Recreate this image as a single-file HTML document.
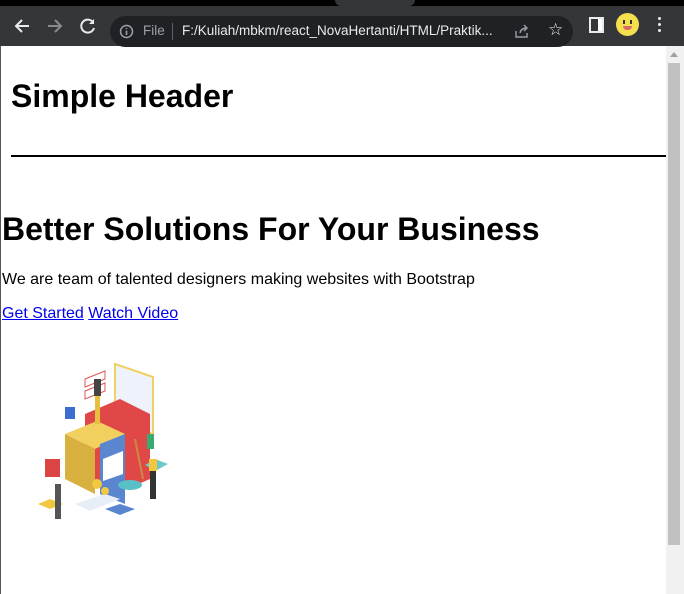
<!DOCTYPE html>
<html><head><style>
body{margin:0;width:684px;height:594px;overflow:hidden;position:relative;background:#fff;font-family:"Liberation Sans",sans-serif}
.top{position:absolute;left:0;top:0;width:684px;height:6px;background:#000}
.tab{position:absolute;left:335px;top:0;width:80px;height:6px;background:#35363a;border-radius:0 0 6px 6px}
.bar{position:absolute;left:0;top:6px;width:684px;height:40px;background:#35363a}
.omni{position:absolute;left:110px;top:10px;width:463px;height:31px;background:#202124;border-radius:16px}
.t{position:absolute;color:#e8eaed;font-size:13.5px}
.page{position:absolute;left:0;top:46px;width:666px;height:548px;border-left:1px solid #555}
.sb{position:absolute;left:666px;top:46px;width:18px;height:548px;background:#f1f1f1}
.thumb{position:absolute;left:668px;top:63px;width:12px;height:482px;background:#c1c1c1}
h1,h2{margin:0;position:absolute;font-weight:bold;color:#000}
a{color:#00e;text-decoration:underline}
</style></head><body>
<div class="top"></div><div class="tab"></div>
<div class="bar">
<svg style="position:absolute;left:12px;top:10px" width="20" height="20" viewBox="0 0 20 20"><path d="M17 10H4M10 4L4 10L10 16" stroke="#e8eaed" stroke-width="2" fill="none"/></svg>
<svg style="position:absolute;left:45px;top:10px" width="20" height="20" viewBox="0 0 20 20"><path d="M3 10H16M10 4L16 10L10 16" stroke="#8a8b8e" stroke-width="2" fill="none"/></svg>
<svg style="position:absolute;left:78px;top:10px" width="20" height="20" viewBox="0 0 20 20"><path d="M15.5 7A6.5 6.5 0 1 0 16 12" stroke="#e8eaed" stroke-width="2" fill="none"/><path d="M16 3V8H11Z" fill="#e8eaed"/></svg>
<div class="omni">
<svg style="position:absolute;left:9px;top:8px" width="15" height="15" viewBox="0 0 15 15"><circle cx="7.5" cy="7.5" r="6" stroke="#9aa0a6" stroke-width="1.5" fill="none"/><path d="M7.5 6.5V11M7.5 4V5" stroke="#9aa0a6" stroke-width="1.6"/></svg>
<span class="t" style="left:33px;top:7px;color:#9aa0a6">File</span>
<div style="position:absolute;left:62px;top:7px;width:1px;height:17px;background:#5f6368"></div>
<span class="t" style="left:72px;top:7px">F:/Kuliah/mbkm/react_NovaHertanti/HTML/Praktik...</span>
<svg style="position:absolute;left:404px;top:7px" width="16" height="16" viewBox="0 0 16 16"><path d="M2 8V14H13V10M6 10Q7 5 13 5M10 2L13 5L10 8" stroke="#9aa0a6" stroke-width="1.4" fill="none"/></svg>
<span class="t" style="left:438px;top:4px;font-size:17px">☆</span>
</div>
<div style="position:absolute;left:589px;top:11px;width:10px;height:12px;border:2px solid #e8eaed;border-left-width:3px;background:#fff"></div>
<div style="position:absolute;left:589px;top:11px;width:7px;height:12px;border:2px solid #e8eaed;border-right:none;background:#35363a"></div>
<div style="position:absolute;left:616px;top:7px;width:23px;height:23px;border-radius:50%;background:#f4e04d"><div style="position:absolute;left:7px;top:7px;width:2px;height:4px;background:#333"></div><div style="position:absolute;left:14px;top:7px;width:2px;height:4px;background:#333"></div><div style="position:absolute;left:7px;top:13px;width:9px;height:4px;border-radius:0 0 5px 5px;background:#d66"></div></div>
<div style="position:absolute;left:658px;top:11px;width:3px;height:3px;background:#e8eaed;border-radius:50%;box-shadow:0 6px 0 #e8eaed,0 12px 0 #e8eaed"></div>
</div>
<div class="page">
<h2 style="left:10px;top:32px;font-size:32px">Simple Header</h2>
<div style="position:absolute;left:10px;top:109px;width:655px;height:2px;background:#000"></div>
<h1 style="left:1px;top:165px;font-size:32px">Better Solutions For Your Business</h1>
<div style="position:absolute;left:1px;top:225px;font-size:16px">We are team of talented designers making websites with Bootstrap</div>
<div style="position:absolute;left:1px;top:259px;font-size:16px"><a>Get Started</a> <a>Watch Video</a></div>
<svg style="position:absolute;left:34px;top:313px" width="140" height="160" viewBox="0 0 140 160">
<path d="M80 5L118 18V75L80 62Z" fill="#eef3fb" stroke="#f0d060" stroke-width="2"/>
<path d="M50 20L70 12V20L50 28ZM50 32L70 24V32L50 40Z" fill="none" stroke="#e05555"/>
<path d="M50 55L85 40L115 55V120L80 135L50 120Z" fill="#e04848"/>
<path d="M30 75L62 62L90 75L60 90Z" fill="#f2d060"/>
<path d="M30 75L60 90V135L30 120Z" fill="#d8b040"/>
<path d="M65 85L90 75V145L65 135Z" fill="#5a86d0"/>
<path d="M68 100L88 92V115L68 122Z" fill="#fff"/>
<rect x="10" y="100" width="15" height="18" fill="#d44"/>
<path d="M3 145L15 140L28 145L15 150Z" fill="#f2c840"/>
<path d="M40 145L70 135L85 140L55 152Z" fill="#e8eef8"/>
<path d="M70 150L85 145L100 150L85 156Z" fill="#5a86d0"/>
<ellipse cx="95" cy="126" rx="12" ry="5" fill="#5ac0c8"/>
<path d="M120 100L133 105L120 112L110 106Z" fill="#6fc8c8"/>
<circle cx="62" cy="125" r="5" fill="#f2c840"/><circle cx="70" cy="132" r="4" fill="#f2c840"/>
<rect x="60" y="35" width="5" height="30" fill="#e8c040"/><rect x="59" y="20" width="7" height="17" fill="#444"/>
<rect x="30" y="48" width="10" height="12" fill="#3a6ed0"/>
<rect x="20" y="125" width="6" height="35" fill="#555"/>
<rect x="115" y="110" width="6" height="30" fill="#333"/><rect x="114" y="100" width="8" height="12" fill="#f2c840"/>
<rect x="112" y="75" width="7" height="15" fill="#3aaa70"/>
<path d="M100 80L108 120" stroke="#c88a40" stroke-width="2"/>
</svg>
</div>
<div class="sb"></div><div class="thumb"></div>
<svg style="position:absolute;left:669px;top:50px" width="10" height="8"><path d="M1 7L5 2L9 7Z" fill="#a0a0a0"/></svg>
</body></html>
